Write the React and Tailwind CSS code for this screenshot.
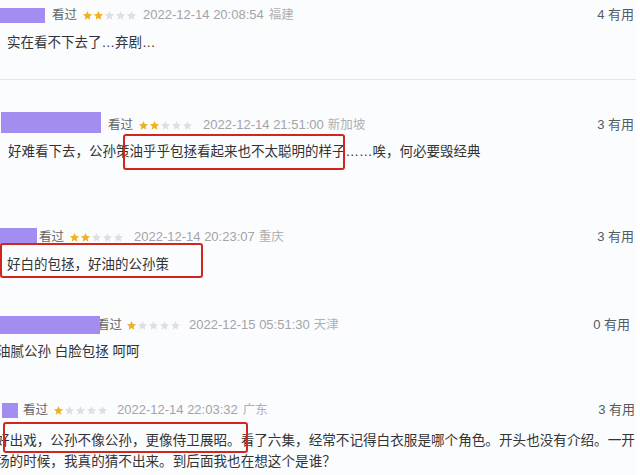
import React from 'react'

const font = { fontFamily: '"Liberation Sans", "Noto Sans CJK SC", sans-serif' }

const Star = ({ on }) => (
  <svg viewBox="0 0 24 24" className="w-[11px] h-[11px]">
    <path
      d="M12 2l2.9 6.6 7.1.7-5.4 4.8 1.6 7L12 17.3 5.8 21.1l1.6-7L2 9.3l7.1-.7z"
      fill={on ? '#f2b01e' : '#dedfe3'}
    />
  </svg>
)

const Stars = ({ n, className }) => (
  <div className={`flex items-center ${className}`}>
    {[0, 1, 2, 3, 4].map(i => (
      <Star key={i} on={i < n} />
    ))}
  </div>
)

const Useful = ({ n, className }) => (
  <div className={`ml-auto text-[13px] text-[#555a60] ${className}`}>
    {n} 有用
  </div>
)

const RedBox = ({ className }) => (
  <div className={`absolute border-2 border-[#d0261f] rounded-[3px] pointer-events-none ${className}`} />
)

export default function App() {
  return (
    <div
      className="relative w-[640px] h-[475px] overflow-hidden bg-[#fbfcfe] text-[#333]"
      style={font}
    >
      {/* row 1 */}
      <div className="relative h-[80px] pt-[5px] border-b border-[#e4e7ee] mr-[4px]">
        <div className="flex items-center h-[20px] text-[12.5px] leading-[20px]">
          <div className="w-[45px] h-[15px] bg-[#a48df0]" />
          <span className="ml-[7px] text-[#666]">看过</span>
          <Stars n={2} className="ml-[5px]" />
          <span className="ml-[6px] text-[13px] text-[#a3a3a8]">2022-12-14 20:08:54</span>
          <span className="ml-[5px] text-[#b0b0b4]">福建</span>
          <Useful n={4} className="pr-[2px]" />
        </div>
        <div className="mt-[8px] pl-[7px] text-[13.5px] leading-[20px]">实在看不下去了…弃剧…</div>
      </div>

      {/* row 2 */}
      <div className="relative h-[120px] pt-[35px] mr-[4px]">
        <div className="flex items-center h-[20px] text-[12.5px] leading-[20px]">
          <div className="self-start -mt-[3px] ml-[1px] w-[100px] h-[21px] bg-[#a48df0]" />
          <span className="ml-[7px] text-[#666]">看过</span>
          <Stars n={2} className="ml-[5px]" />
          <span className="ml-[10px] text-[13px] text-[#a3a3a8]">2022-12-14 21:51:00</span>
          <span className="ml-[4px] text-[#b0b0b4]">新加坡</span>
          <Useful n={3} className="pr-[2px]" />
        </div>
        <div className="mt-[7px] pl-[8px] text-[13.5px] leading-[20px] whitespace-nowrap">
          好难看下去，公孙策油乎乎包拯看起来也不太聪明的样子……唉，何必要毁经典
        </div>
        <RedBox className="left-[123px] top-[54px] w-[222px] h-[36px]" />
      </div>

      {/* row 3 */}
      <div className="relative h-[90px] pt-[27px] mr-[4px]">
        <div className="flex items-center h-[20px] text-[12.5px] leading-[20px]">
          <div className="self-start mt-[1px] w-[37px] h-[17px] bg-[#a48df0]" />
          <span className="ml-[2px] text-[#666]">看过</span>
          <Stars n={2} className="ml-[5px]" />
          <span className="ml-[10px] text-[13px] text-[#a3a3a8]">2022-12-14 20:23:07</span>
          <span className="ml-[4px] text-[#b0b0b4]">重庆</span>
          <Useful n={3} className="pr-[2px]" />
        </div>
        <div className="mt-[8px] pl-[7px] text-[13.5px] leading-[20px]">好白的包拯，好油的公孙策</div>
        <RedBox className="left-0 top-[43px] w-[203px] h-[35px]" />
      </div>

      {/* row 4 */}
      <div className="relative h-[90px] pt-[25px] mr-[4px]">
        <div className="flex items-center h-[20px] text-[12.5px] leading-[20px]">
          <div className="relative z-10 w-[100px] h-[18px] bg-[#a48df0]" />
          <span className="-ml-[3px] text-[#666]">看过</span>
          <Stars n={1} className="ml-[4px]" />
          <span className="ml-[8px] text-[13px] text-[#a3a3a8]">2022-12-15 05:51:30</span>
          <span className="ml-[4px] text-[#b0b0b4]">天津</span>
          <Useful n={0} className="pr-[6px]" />
        </div>
        <div className="mt-[7px] -ml-[3px] text-[13.5px] leading-[20px]">油腻公孙 白脸包拯 呵呵</div>
      </div>

      {/* row 5 */}
      <div className="relative h-[95px] pt-[20px] mr-[4px]">
        <div className="flex items-center h-[20px] text-[12.5px] leading-[20px]">
          <div className="ml-[2px] w-[16px] h-[15px] bg-[#a48df0]" />
          <span className="ml-[5px] text-[#666]">看过</span>
          <Stars n={1} className="ml-[5px]" />
          <span className="ml-[9px] text-[13px] text-[#a3a3a8]">2022-12-14 22:03:32</span>
          <span className="ml-[5px] text-[#b0b0b4]">广东</span>
          <Useful n={3} className="pr-[1px]" />
        </div>
        <div className="mt-[10px] -ml-[4px] text-[13.6px] leading-[21px] whitespace-nowrap">
          <div>好出戏，公孙不像公孙，更像侍卫展昭。看了六集，经常不记得白衣服是哪个角色。开头也没有介绍。一开</div>
          <div>场的时候，我真的猜不出来。到后面我也在想这个是谁？</div>
        </div>
        <RedBox className="left-[3px] top-[42px] w-[245px] h-[31px]" />
      </div>

      <div className="absolute top-0 right-0 w-[4px] h-full bg-white" />
    </div>
  )
}
